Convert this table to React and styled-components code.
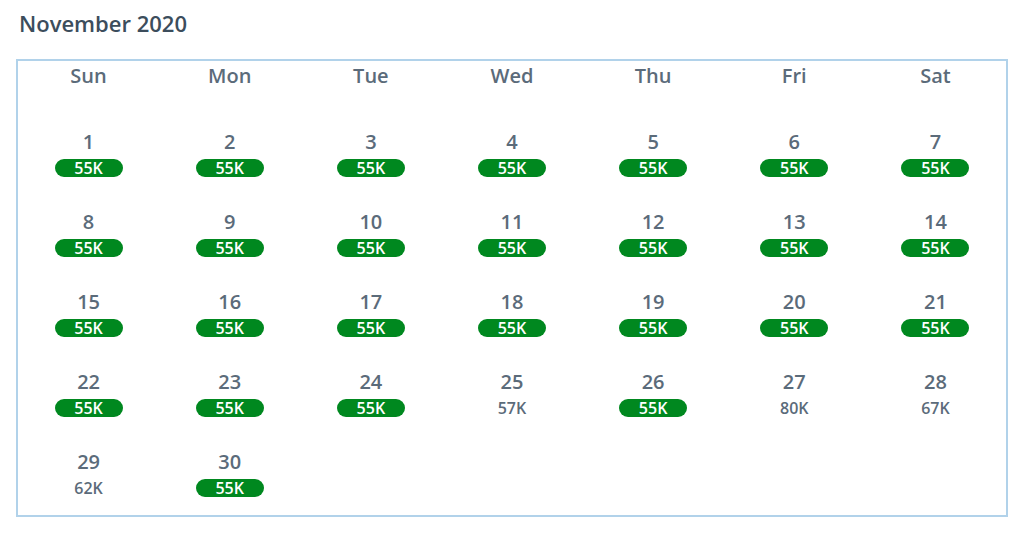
import React from "react";
import styled, { createGlobalStyle } from "styled-components";

const GlobalStyle = createGlobalStyle`
  html, body {
    margin: 0;
    padding: 0;
    background: #fff;
    font-family: "Open Sans", "Noto Sans", sans-serif;
  }
`;

const Page = styled.div`
  padding: 8px 16px 0 16px;
  width: 992px;
`;

const Title = styled.h2`
  margin: 0 0 21px 3px;
  font-size: 22px;
  line-height: 30px;
  font-weight: 600;
  color: #3c4d5c;
`;

const CalendarBox = styled.div`
  border: 2px solid #b1d2ea;
  padding: 0 0 18px 0;
`;

const HeaderRow = styled.div`
  display: grid;
  grid-template-columns: repeat(7, 1fr);
  height: 30px;
  margin-bottom: 39px;
`;

const DayName = styled.div`
  text-align: center;
  font-size: 20px;
  line-height: 30px;
  font-weight: 600;
  color: #5b6b7a;
`;

const Grid = styled.div`
  display: grid;
  grid-template-columns: repeat(7, 1fr);
  row-gap: 33px;
`;

const Cell = styled.div`
  display: flex;
  flex-direction: column;
  align-items: center;
  height: 47px;
`;

const DayNum = styled.div`
  font-size: 20px;
  line-height: 24px;
  font-weight: 600;
  color: #5b6b7a;
`;

const Price = styled.div`
  margin-top: 5px;
  width: 68px;
  height: 18px;
  border-radius: 9px;
  display: flex;
  align-items: center;
  justify-content: center;
  font-size: 16px;
  font-weight: 600;
  line-height: 18px;
  color: ${(p) => (p.$deal ? "#fff" : "#5b6b7a")};
  background: ${(p) => (p.$deal ? "#00881f" : "transparent")};
`;

const prices = {
  25: "57K",
  27: "80K",
  28: "67K",
  29: "62K",
};

const days = ["Sun", "Mon", "Tue", "Wed", "Thu", "Fri", "Sat"];

export default function App() {
  const dates = Array.from({ length: 30 }, (_, i) => i + 1);
  return (
    <Page>
      <GlobalStyle />
      <Title>November 2020</Title>
      <CalendarBox>
        <HeaderRow>
          {days.map((d) => (
            <DayName key={d}>{d}</DayName>
          ))}
        </HeaderRow>
        <Grid>
          {dates.map((n) => {
            const p = prices[n];
            return (
              <Cell key={n}>
                <DayNum>{n}</DayNum>
                <Price $deal={!p}>{p || "55K"}</Price>
              </Cell>
            );
          })}
        </Grid>
      </CalendarBox>
    </Page>
  );
}
